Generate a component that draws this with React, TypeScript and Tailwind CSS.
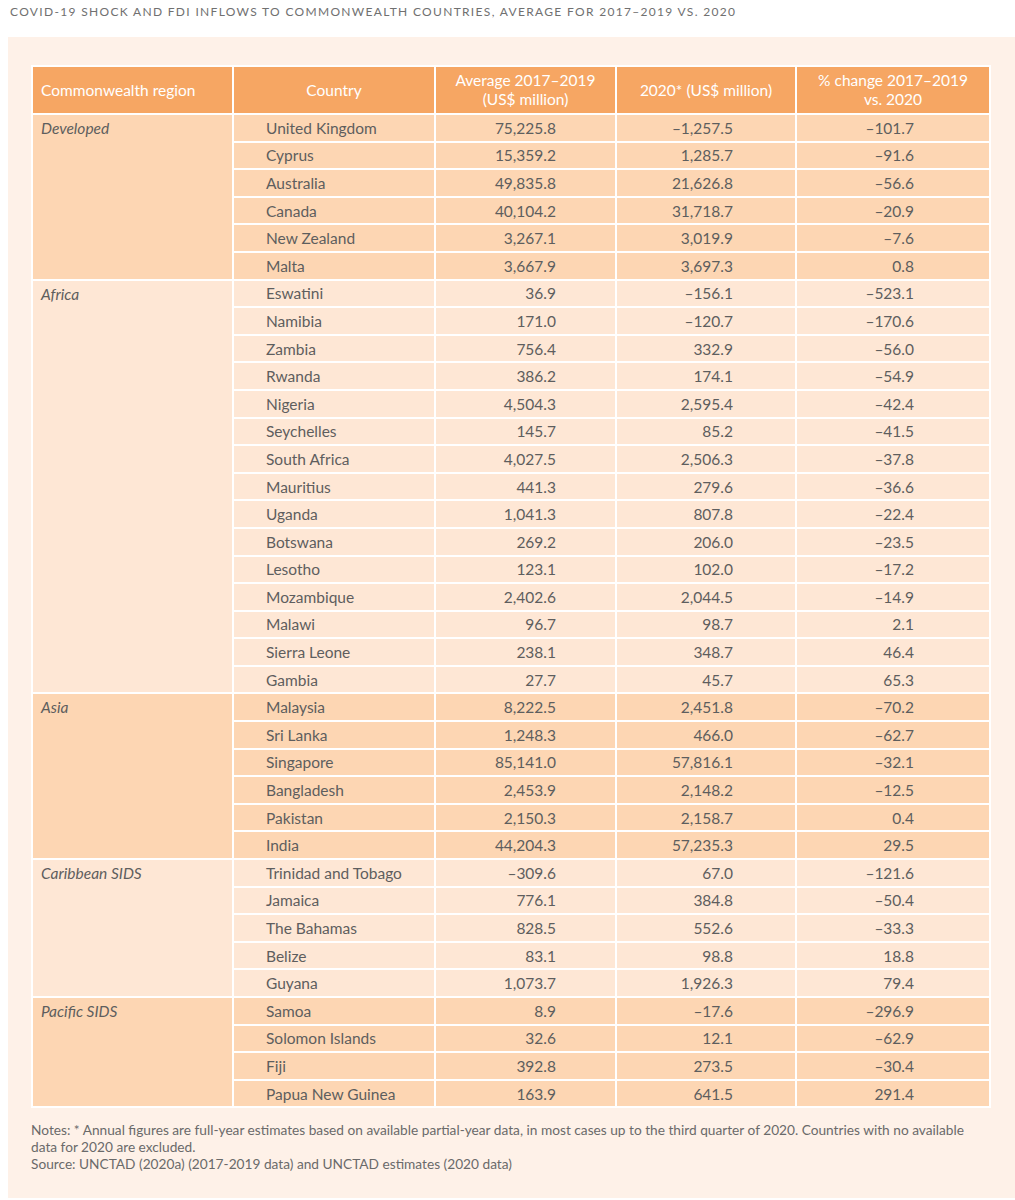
import React from "react";

type Row = [string, string, string, string];
type Group = { region: string; dark: boolean; rows: Row[] };

const groups: Group[] = [
  {
    region: "Developed",
    dark: true,
    rows: [
      ["United Kingdom", "75,225.8", "\u20131,257.5", "\u2013101.7"],
      ["Cyprus", "15,359.2", "1,285.7", "\u201391.6"],
      ["Australia", "49,835.8", "21,626.8", "\u201356.6"],
      ["Canada", "40,104.2", "31,718.7", "\u201320.9"],
      ["New Zealand", "3,267.1", "3,019.9", "\u20137.6"],
      ["Malta", "3,667.9", "3,697.3", "0.8"],
    ],
  },
  {
    region: "Africa",
    dark: false,
    rows: [
      ["Eswatini", "36.9", "\u2013156.1", "\u2013523.1"],
      ["Namibia", "171.0", "\u2013120.7", "\u2013170.6"],
      ["Zambia", "756.4", "332.9", "\u201356.0"],
      ["Rwanda", "386.2", "174.1", "\u201354.9"],
      ["Nigeria", "4,504.3", "2,595.4", "\u201342.4"],
      ["Seychelles", "145.7", "85.2", "\u201341.5"],
      ["South Africa", "4,027.5", "2,506.3", "\u201337.8"],
      ["Mauritius", "441.3", "279.6", "\u201336.6"],
      ["Uganda", "1,041.3", "807.8", "\u201322.4"],
      ["Botswana", "269.2", "206.0", "\u201323.5"],
      ["Lesotho", "123.1", "102.0", "\u201317.2"],
      ["Mozambique", "2,402.6", "2,044.5", "\u201314.9"],
      ["Malawi", "96.7", "98.7", "2.1"],
      ["Sierra Leone", "238.1", "348.7", "46.4"],
      ["Gambia", "27.7", "45.7", "65.3"],
    ],
  },
  {
    region: "Asia",
    dark: true,
    rows: [
      ["Malaysia", "8,222.5", "2,451.8", "\u201370.2"],
      ["Sri Lanka", "1,248.3", "466.0", "\u201362.7"],
      ["Singapore", "85,141.0", "57,816.1", "\u201332.1"],
      ["Bangladesh", "2,453.9", "2,148.2", "\u201312.5"],
      ["Pakistan", "2,150.3", "2,158.7", "0.4"],
      ["India", "44,204.3", "57,235.3", "29.5"],
    ],
  },
  {
    region: "Caribbean SIDS",
    dark: false,
    rows: [
      ["Trinidad and Tobago", "\u2013309.6", "67.0", "\u2013121.6"],
      ["Jamaica", "776.1", "384.8", "\u201350.4"],
      ["The Bahamas", "828.5", "552.6", "\u201333.3"],
      ["Belize", "83.1", "98.8", "18.8"],
      ["Guyana", "1,073.7", "1,926.3", "79.4"],
    ],
  },
  {
    region: "Pacific SIDS",
    dark: true,
    rows: [
      ["Samoa", "8.9", "\u201317.6", "\u2013296.9"],
      ["Solomon Islands", "32.6", "12.1", "\u201362.9"],
      ["Fiji", "392.8", "273.5", "\u201330.4"],
      ["Papua New Guinea", "163.9", "641.5", "291.4"],
    ],
  },
];

export default function App() {
  return (
    <div
      className="w-[1015px] h-[1200px] bg-white text-[#5e5e5e]"
      style={{ fontFamily: "Lato, 'Open Sans', sans-serif" }}
    >
      <div className="h-[37px] pl-[10px] pt-[3px] text-[12px] leading-[18px] tracking-[0.11em] text-[#707070]">
        COVID-19 SHOCK AND FDI INFLOWS TO COMMONWEALTH COUNTRIES, AVERAGE FOR 2017–2019 VS. 2020
      </div>
      <div className="ml-[8px] h-[1161px] bg-[#fef1e8] pt-[28px] pl-[23px] pr-[25px]">
        <table className="w-[958px] table-fixed border-collapse border-2 border-white">
          <colgroup>
            <col className="w-[201px]" />
            <col className="w-[202px]" />
            <col className="w-[181px]" />
            <col className="w-[180px]" />
            <col className="w-[194px]" />
          </colgroup>
          <thead>
            <tr className="bg-[#f6a663] text-white text-[15.5px] leading-[19px]">
              <th className="h-[48px] border-2 border-white text-left font-normal pl-[8px]">
                Commonwealth region
              </th>
              <th className="border-2 border-white font-normal">Country</th>
              <th className="border-2 border-white font-normal">
                Average 2017–2019
                <br />
                (US$ million)
              </th>
              <th className="border-2 border-white font-normal">2020* (US$ million)</th>
              <th className="border-2 border-white font-normal">
                % change 2017–2019
                <br />
                vs. 2020
              </th>
            </tr>
          </thead>
          <tbody className="text-[15.5px] leading-[18px]">
            {groups.map((g) =>
              g.rows.map((r, i) => (
                <tr key={g.region + r[0]} className={g.dark ? "bg-[#fdd6b3]" : "bg-[#fee7d5]"}>
                  {i === 0 && (
                    <td
                      rowSpan={g.rows.length}
                      className="border-2 border-white align-top italic pl-[8px] pt-[4px]"
                    >
                      {g.region}
                    </td>
                  )}
                  <td className="h-[27.6px] border-2 border-white text-left pl-[32px] py-0">{r[0]}</td>
                  <td className="border-2 border-white text-right pr-[59px] py-0">{r[1]}</td>
                  <td className="border-2 border-white text-right pr-[62px] py-0">{r[2]}</td>
                  <td className="border-2 border-white text-right pr-[75px] py-0">{r[3]}</td>
                </tr>
              ))
            )}
          </tbody>
        </table>
        <div className="mt-[13px] pr-[20px] text-[13.7px] leading-[17px] text-[#6a6a6a]">
          <p>
            Notes: * Annual figures are full-year estimates based on available partial-year data, in most cases up to the third quarter of 2020. Countries with no available data for 2020 are excluded.
          </p>
          <p>Source: UNCTAD (2020a) (2017-2019 data) and UNCTAD estimates (2020 data)</p>
        </div>
      </div>
    </div>
  );
}
